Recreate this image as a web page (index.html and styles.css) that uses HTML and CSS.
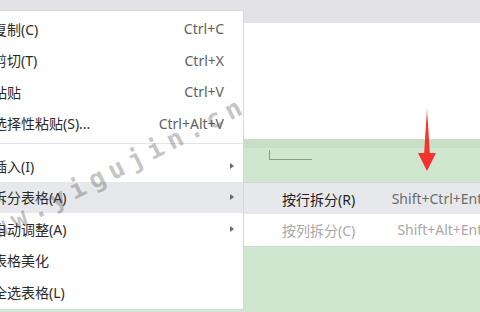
FILE: index.html
```html
<!DOCTYPE html>
<html lang="zh-CN">
  <head>
    <meta charset="UTF-8" />
    <title>表格右键菜单</title>
    <link rel="stylesheet" href="styles.css">
  </head>
  <body>
    <div class="screen">
      <div class="toolbar"></div>
      <div class="doc"></div>
      <div class="table-area">
        <div class="cell-mark"></div>
      </div>

      <ul class="menu">
        <li class="item"><span class="label">复制(C)</span><span class="key">Ctrl+C</span><span class="more"></span></li>
        <li class="item"><span class="label">剪切(T)</span><span class="key">Ctrl+X</span><span class="more"></span></li>
        <li class="item"><span class="label">粘贴</span><span class="key">Ctrl+V</span><span class="more"></span></li>
        <li class="item"><span class="label">选择性粘贴(S)...</span><span class="key">Ctrl+Alt+V</span><span class="more"></span></li>
        <li class="sep"></li>
        <li class="item"><span class="label">插入(I)</span><span class="more"><i class="tri"></i></span></li>
        <li class="item active"><span class="label">拆分表格(A)</span><span class="more"><i class="tri"></i></span></li>
        <li class="item"><span class="label">自动调整(A)</span><span class="more"><i class="tri"></i></span></li>
        <li class="item"><span class="label">表格美化</span><span class="more"></span></li>
        <li class="item"><span class="label">全选表格(L)</span><span class="more"></span></li>
      </ul>

      <ul class="submenu">
        <li class="item active"><span class="label">按行拆分(R)</span><span class="key">Shift+Ctrl+Enter</span></li>
        <li class="item disabled"><span class="label">按列拆分(C)</span><span class="key">Shift+Alt+Enter</span></li>
      </ul>

      <svg class="pointer" width="18" height="66" viewBox="0 0 18 66">
        <defs>
          <linearGradient id="shaft" x1="0" y1="0" x2="0" y2="1">
            <stop offset="0" stop-color="#f7a07a" />
            <stop offset="0.25" stop-color="#f23a32" />
            <stop offset="1" stop-color="#f52f2f" />
          </linearGradient>
        </defs>
        <polygon points="9,1 11.8,47 18,47 9,65 0,47 6.2,47" fill="url(#shaft)" />
      </svg>

      <div class="watermark">www.yigujin.cn</div>
    </div>
  </body>
</html>
```

FILE: styles.css
```css
* {
  margin: 0;
  padding: 0;
  box-sizing: border-box;
}
body {
  background: #fff;
  font-family: "Noto Sans", "Noto Sans CJK SC", sans-serif;
  font-size: 14px;
}
.screen {
  position: relative;
  width: 480px;
  height: 312px;
  overflow: hidden;
  display: flex;
  flex-direction: column;
}
.toolbar {
  height: 23px;
  background: #e3e3e7;
}
.doc {
  height: 116px;
  background: #fff;
}
.table-area {
  flex: 1;
  background: #cfe6cf;
  border-top: 9px solid #c6dfc6;
}
.cell-mark {
  width: 43px;
  height: 10px;
  margin: 2px 0 0 269px;
  border-left: 1px solid #8d978d;
  border-bottom: 1px solid #8d978d;
}

/* 右键菜单 */
.menu,
.submenu {
  position: absolute;
  list-style: none;
  background: #fff;
  color: #2a2a2a;
}
.menu {
  left: -32px;
  top: 10px;
  width: 276px;
  padding: 2px 0 1px;
  border: 1px solid #dadadd;
}
.item {
  display: flex;
  align-items: center;
  height: 31.5px;
  padding-left: 24px;
  white-space: nowrap;
}
.item .label {
  flex: 1;
}
.item .key {
  color: #606060;
}
.item .more {
  width: 19px;
  padding-left: 6px;
  display: flex;
  align-items: center;
}
.tri {
  width: 0;
  height: 0;
  border-left: 4px solid #6a6a6a;
  border-top: 3.5px solid transparent;
  border-bottom: 3.5px solid transparent;
}
.item.active {
  background: #e6e8ec;
}
.sep {
  height: 1px;
  margin: 4px 0 6px;
  background: #e4e4e6;
}

.submenu {
  left: 243px;
  top: 182px;
  width: 280px;
  border: 1px solid #d3d6d3;
}
.submenu .item {
  padding-left: 38px;
  padding-right: 26px;
}
.submenu .item.active {
  height: 31px;
  color: #1e1e1e;
}
.submenu .item.disabled {
  color: #a8a8a8;
}
.submenu .item.disabled .key {
  color: #a8a8a8;
}
.submenu .item .key {
  color: #6c6c6c;
}

.pointer {
  position: absolute;
  left: 418px;
  top: 106px;
}

.watermark {
  position: absolute;
  left: -33px;
  top: 230px;
  transform-origin: 0 0;
  transform: rotate(-27deg);
  font-family: "DejaVu Sans Mono", monospace;
  font-weight: bold;
  font-size: 26px;
  line-height: 1;
  letter-spacing: 6.2px;
  color: rgba(70, 70, 70, 0.33);
  white-space: nowrap;
  pointer-events: none;
}
```
